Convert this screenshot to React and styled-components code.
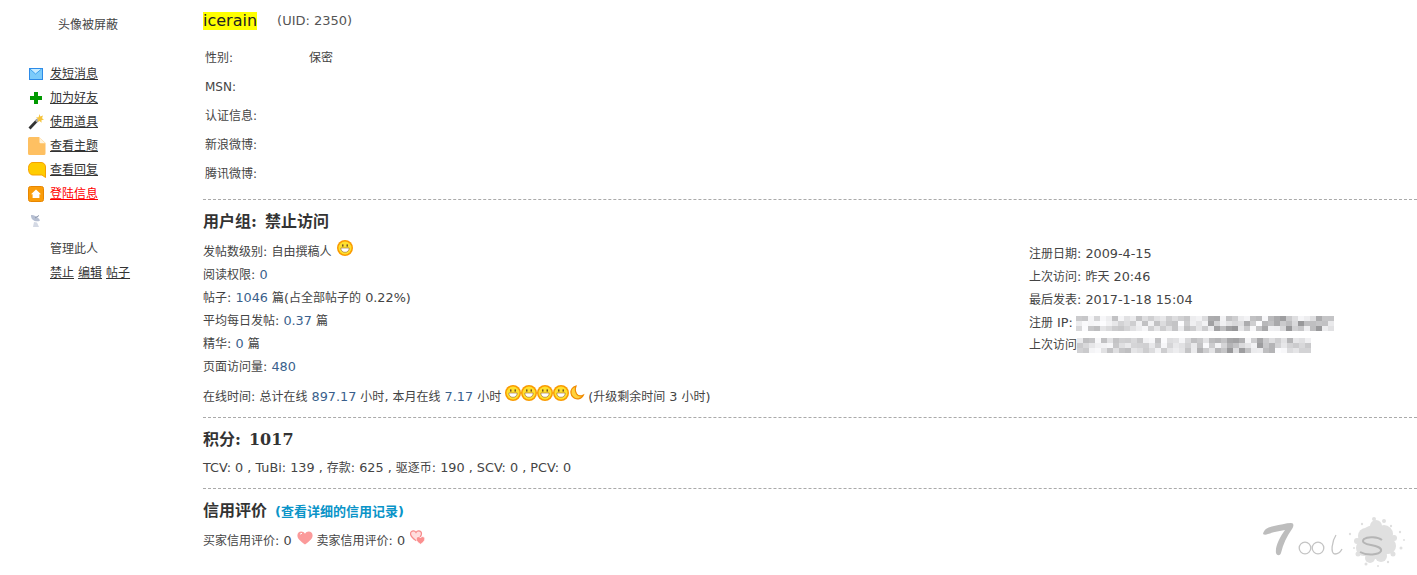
import styled, { createGlobalStyle } from 'styled-components';

const GlobalStyle = createGlobalStyle`
  html, body {
    margin: 0;
    background: #fff;
  }
  body {
    font: 12px/18px "DejaVu Sans", "Noto Sans CJK SC", sans-serif;
    color: #444;
  }
`;

const Page = styled.div`
  display: flex;
  width: 1417px;
  height: 575px;
  overflow: hidden;
`;

const Sidebar = styled.aside`
  flex: 0 0 203px;
  box-sizing: border-box;
  padding-left: 28px;
`;

const Avatar = styled.div`
  width: 118px;
  padding: 16px 0 0 1px;
  height: 46px;
  text-align: center;
`;

const NavList = styled.ul`
  list-style: none;
  margin: 0;
  padding: 0;
`;

const NavItem = styled.li`
  display: flex;
  align-items: center;
  height: 24px;
  a {
    color: ${(p) => (p.$active ? '#f00' : '#333')};
    text-decoration: underline;
    margin-left: 22px;
  }
`;

const IconSlot = styled.span`
  flex: 0 0 0;
  width: 0;
  display: flex;
  align-items: center;
  svg {
    flex: none;
    display: block;
  }
`;

const Satellite = styled.div`
  height: 30px;
  display: flex;
  align-items: center;
  padding-left: 2px;
`;

const AdminBlock = styled.div`
  padding: 1px 0 0 22px;
  line-height: 24px;
  a {
    color: #333;
    text-decoration: underline;
    margin-right: 4px;
  }
`;

const Main = styled.main`
  flex: 1;
  min-width: 0;
`;

const Title = styled.div`
  display: flex;
  align-items: center;
  height: 19px;
  padding-top: 11px;
  margin-bottom: 13px;
`;

const Name = styled.span`
  background: #ff0;
  color: #222;
  font-size: 16px;
  line-height: 18px;
`;

const Uid = styled.span`
  margin-left: 20px;
  font-size: 13px;
  color: #555;
`;

const ProfileTable = styled.div`
  padding-left: 2px;
`;

const ProfileRow = styled.div`
  display: grid;
  grid-template-columns: 104px 1fr;
  height: 29px;
  align-items: center;
`;

const Section = styled.section`
  padding-top: ${(p) => p.$top || 0}px;
`;

const Rule = styled.hr`
  margin: 0;
  border: 0;
  border-top: 1px dashed #aaa;
`;

const Heading = styled.h2`
  margin: 0;
  font: 700 16px/20px "DejaVu Serif", "Noto Sans CJK SC", serif;
  word-spacing: 2.5px;
  color: #333;
`;

const HeadingLink = styled.a`
  margin-left: 8px;
  font: 700 13px/20px "DejaVu Sans", "Noto Sans CJK SC", sans-serif;
  color: #0a94c8;
  text-decoration: none;
`;

const GroupGrid = styled.div`
  display: grid;
  grid-template-columns: 826px 1fr;
`;

const Line = styled.div`
  height: 23px;
  line-height: 23px;
  white-space: nowrap;
  em {
    font-style: normal;
    color: #3a5f8c;
  }
  svg {
    vertical-align: baseline;
  }
`;

const Latin = styled.span`
  font-size: 12.8px;
`;

const Spacer = styled.span`
  display: inline-block;
  width: ${(p) => p.$w}px;
`;

const Stats = styled.div`
  padding-top: ${(p) => p.$top}px;
`;

const LogoWrap = styled.div`
  position: absolute;
  left: 1258px;
  top: 512px;
`;

const MosaicSvg = styled.svg`
  margin-left: ${(p) => p.$gap}px;
  vertical-align: -4px !important;
`;

// body font is hinted verdana in the shot, latin runs come out a bit wider than the cjk
const T = ({ children }) =>
  children.split(/([\u0000-\u2fff]+)/).map((part, i) =>
    i % 2 ? <Latin key={i}>{part}</Latin> : part
  );

const Sun = () => (
  <svg width="16" height="16" viewBox="0 0 16 16">
    <circle cx="8" cy="8" r="8" fill="#fa9a00" />
    <circle cx="8" cy="8" r="6.500" fill="#ffe02e" />
    <rect x="5.200" y="4.400" width="1.200" height="2.200" fill="#532" />
    <rect x="9.600" y="4.400" width="1.200" height="2.200" fill="#532" />
    <path d="M3.800 8h8.400c0 2.800-1.900 4.300-4.200 4.300S3.800 10.800 3.800 8z" fill="#fff" stroke="#963" strokeWidth="0.600" />
  </svg>
);

const Moon = () => (
  <svg width="16" height="16" viewBox="0 0 16 16">
    <path d="M7 1.200C3.800 2 1.600 4.800 2 8.200c.4 3.600 3.800 6.200 7.400 5.600 2.400-.4 4.200-1.800 5-3.800-2.600 1.400-5.400.8-6.800-1.200C6.200 6.600 6 3.600 7 1.200z" fill="#ffd23c" stroke="#f08a00" strokeWidth="1.200" />
  </svg>
);

const Heart = () => (
  <svg width="16" height="14" viewBox="0 0 16 14">
    <path d="M8 13.400C3 9.800.4 7.400.4 4.400.4 2 2.200.6 4.200.6 5.800.6 7.200 1.400 8 2.800 8.800 1.400 10.200.6 11.800.6c2 0 3.800 1.400 3.800 3.800 0 3-2.600 5.400-7.600 9z" fill="#fb9a9a" />
    <path d="M3 3.400c.5-.7 1.200-1 2-1" fill="none" stroke="#fff" strokeWidth="1" />
  </svg>
);

const TwoHearts = () => (
  <svg width="16" height="15" viewBox="0 0 16 15">
    <path d="M6 10.500C2.400 8 .5 6.200.5 3.800.5 2 1.900.8 3.400.8 4.600.8 5.500 1.400 6 2.400 6.500 1.400 7.400.8 8.600.8c1.500 0 2.900 1.200 2.900 3 0 2.400-1.900 4.200-5.500 6.700z" fill="#fdd" stroke="#f78c8c" strokeWidth="1.200" />
    <path d="M10.500 14.200c-2.800-2-4.300-3.400-4.300-5.300 0-1.400 1.100-2.300 2.300-2.300.9 0 1.600.4 2 1.200.4-.8 1.100-1.200 2-1.200 1.200 0 2.300.9 2.300 2.300 0 1.900-1.500 3.300-4.300 5.300z" fill="#fb8f8f" stroke="#fff" strokeWidth="0.700" />
  </svg>
);

const Mail = () => (
  <svg width="15" height="12" viewBox="0 0 15 12">
    <rect x="1.500" y="0.500" width="13" height="11" fill="#7bcbfa" stroke="#2d8be8" />
    <path d="M2 1l5.500 5L13.500 1" fill="#c8ecff" stroke="#3fa2ee" />
  </svg>
);

const Plus = () => (
  <svg width="15" height="14" viewBox="0 0 15 14">
    <path d="M6 1h4v4h4v4h-4v4H6V9H2V5h4z" fill="#090" />
  </svg>
);

const Wand = () => (
  <svg width="16" height="16" viewBox="0 0 16 16">
    <path d="M1.500 14.500L9.500 6" stroke="#333" strokeWidth="2.800" />
    <path d="M8 7.600L10 5.500" stroke="#aaa" strokeWidth="2.800" />
    <path d="M11.500 0l.8 2.600L15 1.600l-1 2.600 2 1.400-2.600.6.2 2.600-2-1.800-2 1 .6-2.600L8 3.400l2.600-.2z" fill="#f5c33b" />
  </svg>
);

const Folder = () => (
  <svg width="18" height="18" viewBox="0 0 18 18">
    <path d="M1.500 0H11l6.500 6v10.500a1.500 1.500 0 0 1-1.500 1.500H1.500A1.500 1.500 0 0 1 0 16.500V1.500A1.500 1.500 0 0 1 1.500 0z" fill="#fec062" />
    <path d="M11.500.4v4.800a1 1 0 0 0 1 1h4.800z" fill="#fff3dc" />
  </svg>
);

const Bubble = () => (
  <svg width="18" height="16" viewBox="0 0 18 16">
    <path d="M5 .5h8c2.600 0 4.500 1.800 4.500 4.500v10.500l-3.500-2.500H5C2.400 13 .5 11 .5 6.700S2.400.5 5 .5z" fill="#fc0" stroke="#f5a100" />
  </svg>
);

const Home = () => (
  <svg width="16" height="16" viewBox="0 0 16 16">
    <rect x="0.500" y="0.500" width="15" height="15" rx="2" fill="#fa9d0a" stroke="#e88600" />
    <path d="M8 3.500L3 8.200h1.600V12h6.800V8.200H13z" fill="#fff" />
  </svg>
);

const Dish = () => (
  <svg width="12" height="14" viewBox="0 0 12 14">
    <path d="M1 1c3 0 7 1.500 9 5.500-2 1.500-5.500 1-7.500-1C1.500 4.500.8 2.800 1 1z" fill="#b6bfd2" />
    <path d="M4 8l-1 5h6L7 8.500z" fill="#d4d9e4" />
    <path d="M5 4l4-2.500" stroke="#8d97ad" />
  </svg>
);

const splash = [
  [117, 30, 17], [108, 24, 8], [126, 22, 9], [130, 34, 8], [106, 36, 8], [118, 14, 6],
  [123, 44, 6], [112, 46, 5], [99, 29, 3], [136, 26, 3], [135, 42, 2.500], [116, 7, 2],
  [126, 9, 2], [100, 42, 2.500], [108, 52, 1.500], [143, 36, 1.500], [92, 22, 1.200], [142, 20, 1.200],
  [96, 36, 1], [146, 28, 1], [130, 50, 1.200], [120, 54, 1], [104, 12, 1.200], [133, 14, 1.200],
];

const Logo = () => (
  <svg width="150" height="60" viewBox="0 0 150 60" fill="none">
    {splash.map(([cx, cy, r]) => (
      <circle key={`${cx}-${cy}`} cx={cx} cy={cy} r={r} fill="#e0e0e0" />
    ))}
    <path d="M5 22c1-5 5-7 11-8 6-1 12-3 17-3 3 0 3 3 1 6-5 7-9 15-11 24-1 3-4 3-5 0-1-7 4-16 9-23-6 1-12 2-17 4-2 1-4 1-5 0z" fill="#bdbdbd" />
    <g stroke="#c4c4c4" strokeWidth="1.300">
      <circle cx="47" cy="36" r="5.800" />
      <circle cx="60" cy="36" r="5.800" />
      <path d="M78 23c-4 6-6 19-1 19 4 0 6-3 7-5" />
    </g>
    <path d="M124 28c-4-3-14-4-18-1-3 3 1 5 7 6 6 1 11 3 10 6-2 4-14 5-21 1" stroke="#b5b5b5" strokeWidth="2" />
  </svg>
);

// pixel mosaic standing in for the redacted ip addresses
const Mosaic = ({ width, seed, gap }) => {
  const cells = [];
  const cols = Math.floor(width / 6);
  for (let r = 0; r < 3; r++) {
    for (let c = 0; c < cols; c++) {
      const n = Math.abs(Math.sin(seed + c * 12.9898 + r * 78.233) * 43758.5453) % 1;
      const depth = c > cols * 0.5 ? 150 : 190;
      const v = Math.round(depth + n * (252 - depth));
      cells.push(<rect key={`${r}-${c}`} x={c * 6} y={r * 5} width="6" height="5" fill={`rgb(${v},${v},${v + 2})`} />);
    }
  }
  return (
    <MosaicSvg width={width} height="15" $gap={gap}>
      {cells}
    </MosaicSvg>
  );
};

const navLinks = [
  { label: '发短消息', icon: <Mail /> },
  { label: '加为好友', icon: <Plus /> },
  { label: '使用道具', icon: <Wand /> },
  { label: '查看主题', icon: <Folder /> },
  { label: '查看回复', icon: <Bubble /> },
  { label: '登陆信息', icon: <Home />, active: true },
];

const profile = [
  ['性别:', '保密'],
  ['MSN:', ''],
  ['认证信息:', ''],
  ['新浪微博:', ''],
  ['腾讯微博:', ''],
];

const App = () => (
  <Page>
    <GlobalStyle />
    <Sidebar>
      <Avatar>头像被屏蔽</Avatar>
      <NavList>
        {navLinks.map((l) => (
          <NavItem key={l.label} $active={l.active}>
            <IconSlot>{l.icon}</IconSlot>
            <a href="#">{l.label}</a>
          </NavItem>
        ))}
      </NavList>
      <Satellite>
        <Dish />
      </Satellite>
      <AdminBlock>
        <div>管理此人</div>
        <div>
          <a href="#">禁止</a>
          <a href="#">编辑</a>
          <a href="#">帖子</a>
        </div>
      </AdminBlock>
    </Sidebar>
    <Main>
      <Title>
        <Name>icerain</Name>
        <Uid>(UID: 2350)</Uid>
      </Title>
      <ProfileTable>
        {profile.map(([k, v]) => (
          <ProfileRow key={k}>
            <span>{k}</span>
            <span>{v}</span>
          </ProfileRow>
        ))}
      </ProfileTable>
      <Section $top={11}>
        <Rule />
      </Section>
      <Section $top={12}>
        <Heading>用户组: 禁止访问</Heading>
        <GroupGrid>
          <Stats $top={8}>
            <Line>
              <T>发帖数级别: 自由撰稿人 </T>
              <Spacer $w={1} />
              <Sun />
            </Line>
            <Line>
              <T>阅读权限: </T>
              <em><T>0</T></em>
            </Line>
            <Line>
              <T>帖子: </T>
              <em><T>1046</T></em>
              <T> 篇(占全部帖子的 0.22%)</T>
            </Line>
            <Line>
              <T>平均每日发帖: </T>
              <em><T>0.37</T></em>
              <T> 篇</T>
            </Line>
            <Line>
              <T>精华: </T>
              <em><T>0</T></em>
              <T> 篇</T>
            </Line>
            <Line>
              <T>页面访问量: </T>
              <em><T>480</T></em>
            </Line>
          </Stats>
          <Stats $top={10}>
            <Line><T>注册日期: 2009-4-15</T></Line>
            <Line><T>上次访问: 昨天 20:46</T></Line>
            <Line><T>最后发表: 2017-1-18 15:04</T></Line>
            <Line>
              <T>注册 IP:</T>
              <Mosaic width={258} seed={3} gap={3} />
            </Line>
            <Line>
              <T>上次访问</T>
              <Mosaic width={234} seed={9} gap={0} />
            </Line>
          </Stats>
        </GroupGrid>
        <Stats $top={7}>
          <Line>
            <T>在线时间: 总计在线 </T>
            <em><T>897.17</T></em>
            <T> 小时, 本月在线 </T>
            <em><T>7.17</T></em>
            <T> 小时 </T>
            <Sun />
            <Sun />
            <Sun />
            <Sun />
            <Moon />
            <Spacer $w={3} />
            <T>(升级剩余时间 3 小时)</T>
          </Line>
        </Stats>
      </Section>
      <Section $top={9}>
        <Rule />
      </Section>
      <Section $top={12}>
        <Heading>积分: 1017</Heading>
        <Stats $top={6}>
          <Line><T>TCV: 0 , TuBi: 139 , 存款: 625 , 驱逐币: 190 , SCV: 0 , PCV: 0</T></Line>
        </Stats>
      </Section>
      <Section $top={9}>
        <Rule />
      </Section>
      <Section $top={12}>
        <Heading>
          信用评价
          <HeadingLink href="#">(查看详细的信用记录)</HeadingLink>
        </Heading>
        <Stats $top={7}>
          <Line>
            <T>买家信用评价: 0</T>
            <Spacer $w={5} />
            <Heart />
            <Spacer $w={4} />
            <T>卖家信用评价: 0</T>
            <Spacer $w={5} />
            <TwoHearts />
          </Line>
        </Stats>
      </Section>
    </Main>
    <LogoWrap>
      <Logo />
    </LogoWrap>
  </Page>
);

export default App;
